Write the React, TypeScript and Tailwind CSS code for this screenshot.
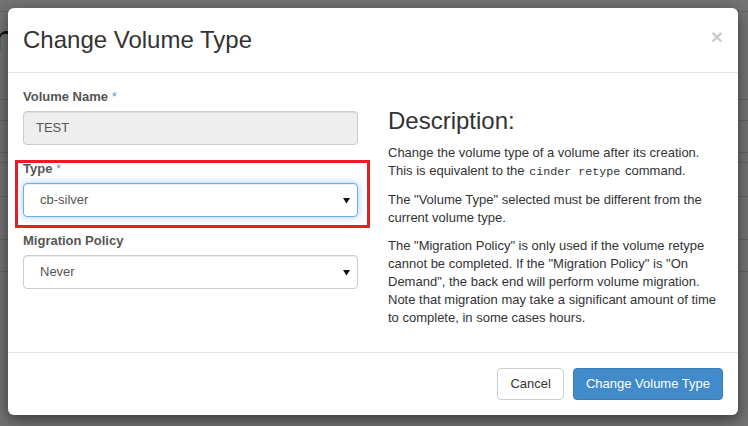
import React from 'react';

function Caret() {
  return (
    <svg className="absolute right-[7px] top-[14px]" width="7" height="6" viewBox="0 0 7 6">
      <path d="M0 0H7L3.5 5.5Z" fill="#111" />
    </svg>
  );
}

function Label({ text, required }: { text: string; required?: boolean }) {
  return (
    <label className="block text-[13px] leading-[18px] font-bold text-[#555] mb-[5px]">
      {text}
      {required && <span className="font-normal text-[#6f9bcc]"> *</span>}
    </label>
  );
}

// heights of the table rows of the page behind the backdrop
const ROWS = [12, 88, 21, 32, 10, 34, 43, 32];

export default function App() {
  return (
    <div className="relative w-[748px] h-[426px] overflow-hidden bg-white font-['Liberation_Sans',Arial,sans-serif]">
      {/* page behind the backdrop */}
      <div className="flex flex-col">
        {ROWS.map((h, i) => (
          <div key={i} className="border-b border-[#ddd]" style={{ height: h }} />
        ))}
      </div>
      <div className="absolute left-[-6px] top-[20px] text-[38px] leading-none text-[#222]">n</div>
      <div className="absolute inset-0 bg-black/55" />

      {/* modal */}
      <div className="absolute left-[8px] top-[8px] w-[730px] rounded-[6px] bg-white shadow-[0_5px_15px_rgba(0,0,0,0.5)] text-[#333]">
        <div className="flex items-start justify-between p-[15px] border-b border-[#e5e5e5]">
          <h3 className="text-[24px] leading-[34px] text-[#333]">Change Volume Type</h3>
          <button className="mt-[3px] text-[21px] leading-none font-bold text-black opacity-20">×</button>
        </div>

        <div className="flex gap-[30px] p-[15px]">
          <div className="w-[335px]">
            <div className="mb-[15px]">
              <Label text="Volume Name" required />
              <div className="h-[34px] rounded-[4px] border border-[#ccc] bg-[#eee] px-[12px] text-[13px] leading-[32px] text-[#555] shadow-[inset_0_1px_1px_rgba(0,0,0,0.075)]">
                TEST
              </div>
            </div>

            <div className="relative mb-[15px]">
              <Label text="Type" required />
              <div className="relative h-[34px] rounded-[4px] border border-[#66afe9] bg-white pl-[16px] text-[13px] leading-[32px] text-[#555] shadow-[inset_0_1px_1px_rgba(0,0,0,0.075),0_0_8px_rgba(102,175,233,0.6)]">
                cb-silver
                <Caret />
              </div>
              <div className="pointer-events-none absolute -left-[8px] -right-[12px] top-0 -bottom-[11px] border-[3px] border-[#e41f26]" />
            </div>

            <div className="mb-[15px]">
              <Label text="Migration Policy" />
              <div className="relative h-[34px] rounded-[4px] border border-[#ccc] bg-white pl-[16px] text-[13px] leading-[32px] text-[#555] shadow-[inset_0_1px_1px_rgba(0,0,0,0.075)]">
                Never
                <Caret />
              </div>
            </div>
          </div>

          <div className="w-[335px] text-[13px] leading-[18px] text-[#333]">
            <h3 className="mt-[20px] mb-[10px] text-[24px] leading-[26px]">Description:</h3>
            <p className="mb-[10px] whitespace-nowrap">
              Change the volume type of a volume after its creation.
              <br />
              This is equivalent to the{' '}
              <code className="px-[1px] font-['Liberation_Mono',monospace] text-[11.7px] text-[#333]">cinder retype</code>{' '}
              command.
            </p>
            <p className="mb-[10px] whitespace-nowrap">
              The "Volume Type" selected must be different from the
              <br />
              current volume type.
            </p>
            <p className="mb-[10px] whitespace-nowrap">
              The "Migration Policy" is only used if the volume retype
              <br />
              cannot be completed. If the "Migration Policy" is "On
              <br />
              Demand", the back end will perform volume migration.
              <br />
              Note that migration may take a significant amount of time
              <br />
              to complete, in some cases hours.
            </p>
          </div>
        </div>

        <div className="flex justify-end gap-[9px] p-[15px] border-t border-[#e5e5e5]">
          <button className="rounded-[4px] border border-[#ccc] bg-white px-[12px] py-[6px] text-[13px] leading-[18px] text-[#333]">
            Cancel
          </button>
          <button className="rounded-[4px] border border-[#357ebd] bg-[#428bca] px-[12px] py-[6px] text-[13px] leading-[18px] text-white">
            Change Volume Type
          </button>
        </div>
      </div>
    </div>
  );
}
